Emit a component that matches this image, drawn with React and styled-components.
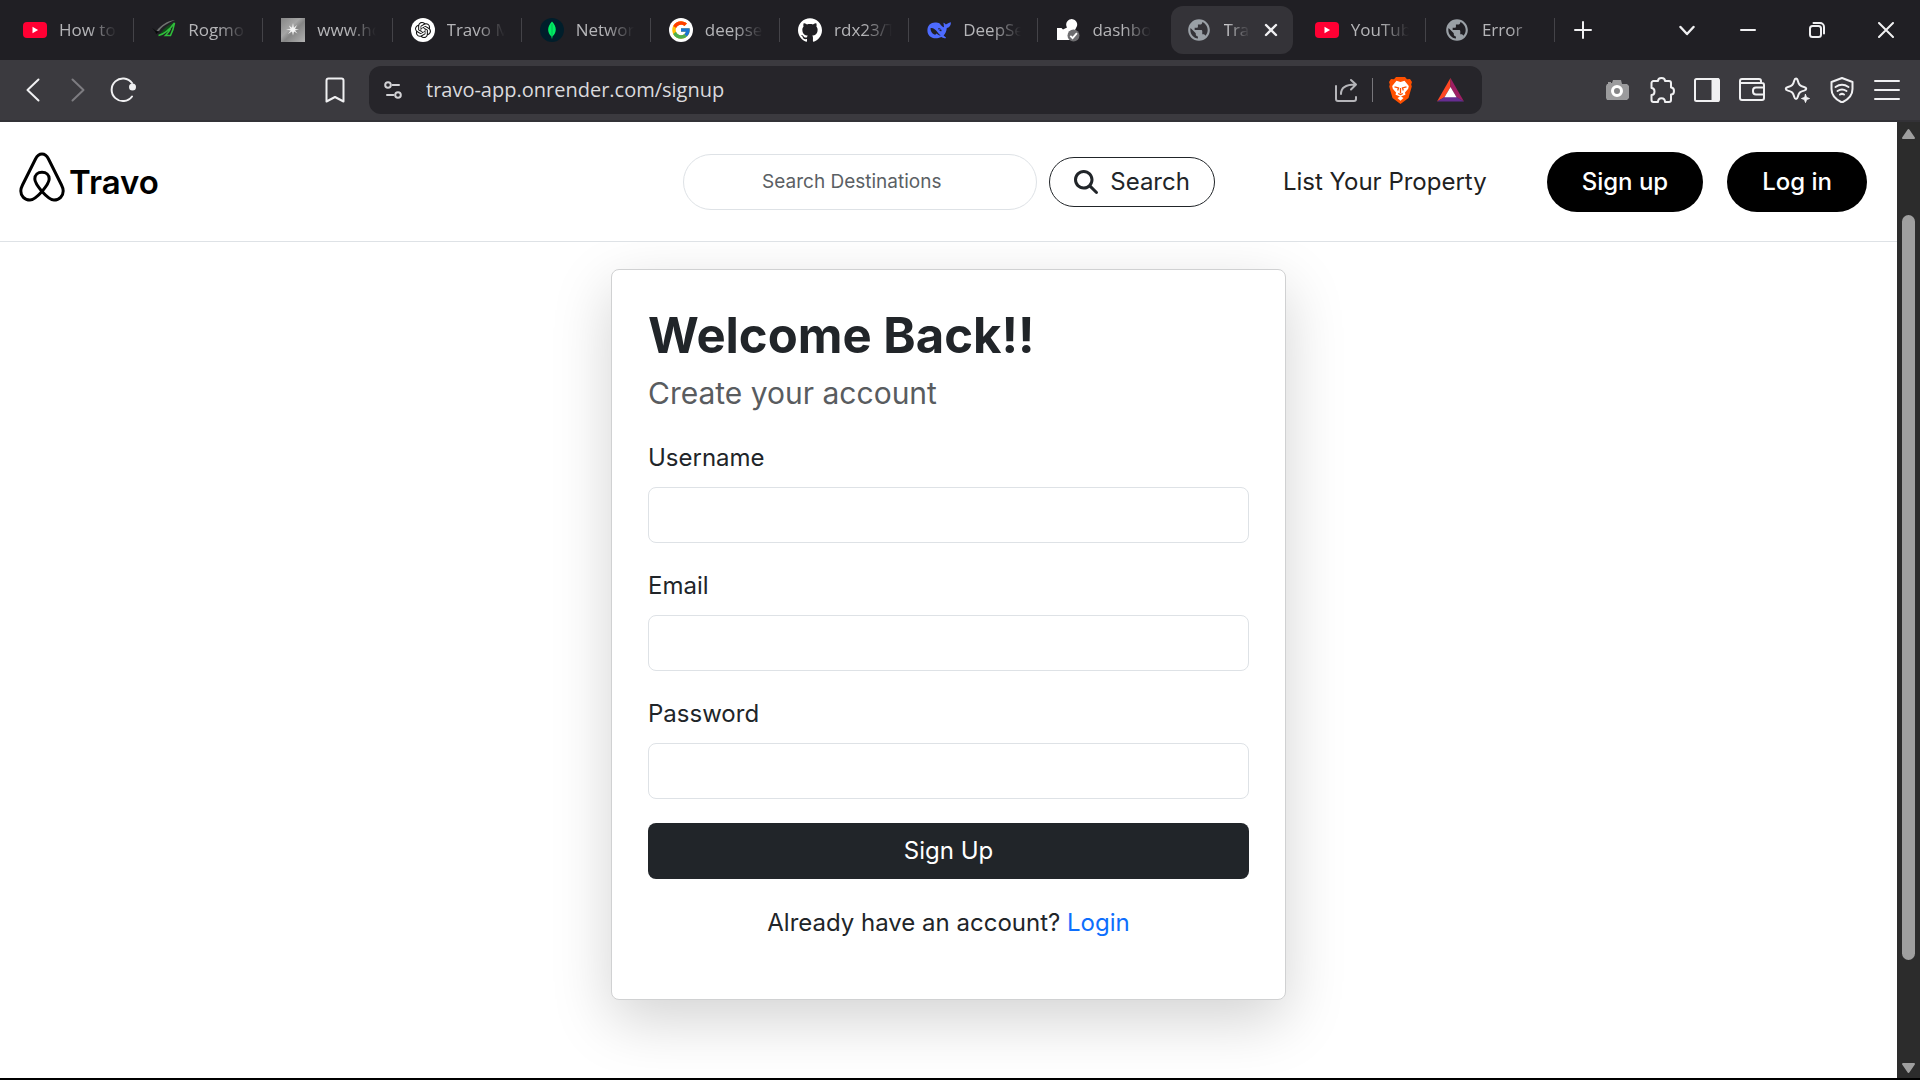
import React from "react";
import styled, { createGlobalStyle } from "styled-components";
import { SiOpenai, SiGithub } from "react-icons/si";
import { FcGoogle } from "react-icons/fc";
import { MdPublic } from "react-icons/md";
import { FaMagnifyingGlass } from "react-icons/fa6";

const uiFont = '"Open Sans", "Noto Sans", sans-serif';
const pageFont = 'Inter, "Liberation Sans", sans-serif';

const GlobalStyle = createGlobalStyle`
  *, *::before, *::after { box-sizing: border-box; }
  body { margin: 0; background: #000; font-family: ${pageFont}; }
  button, input { font: inherit; margin: 0; }
  svg { display: block; flex: none; }
`;

const Window = styled.div`
  display: flex;
  flex-direction: column;
  height: 100vh;
  border-bottom: 2px solid #000;
`;

/* ---------- browser chrome ---------- */

const TabBar = styled.header`
  display: flex;
  align-items: center;
  flex: none;
  height: 60px;
  background: #201f24;
  font-family: ${uiFont};
`;

const TabList = styled.div`
  display: flex;
  align-items: center;
  flex: 1;
  min-width: 0;
  padding-left: 5px;
`;

const Tab = styled.div`
  display: flex;
  align-items: center;
  flex: 1 1 0;
  min-width: 0;
  height: 48px;
  gap: 12px;
  margin: ${(p) => (p.$active ? "0 3px" : "0")};
  padding: ${(p) => (p.$active ? "0 13px 0 15px" : "0 16px 0 18px")};
  border-radius: 12px;
  background: ${(p) => (p.$active ? "#343338" : "transparent")};
  color: ${(p) => (p.$active ? "#e2e2e4" : "#b5b5b8")};
`;

const TabTitle = styled.span`
  flex: 1;
  min-width: 0;
  overflow: hidden;
  white-space: nowrap;
  font-size: 17px;
  line-height: 24px;
  mask-image: linear-gradient(to right, #000 calc(100% - 28px), transparent);
`;

const TabDivider = styled.span`
  flex: none;
  width: 1px;
  height: 24px;
  background: ${(p) => (p.$hidden ? "transparent" : "#444348")};
`;

const IconButton = styled.button`
  display: flex;
  align-items: center;
  justify-content: center;
  flex: none;
  width: ${(p) => p.$width || 45}px;
  height: 45px;
  padding: 0;
  border: 0;
  background: none;
  color: ${(p) => p.$color || "#f0f0f2"};
`;

const WindowControls = styled.div`
  display: flex;
  margin-left: 50px;
`;

const Toolbar = styled.div`
  display: flex;
  align-items: center;
  flex: none;
  height: 62px;
  padding: 0 11px 0 10px;
  border-bottom: 2px solid #333237;
  background: #3b3a3f;
`;

const ToolGroup = styled.div`
  display: flex;
`;

const AddressBar = styled.div`
  display: flex;
  align-items: center;
  flex: 1;
  min-width: 0;
  height: 48px;
  margin: 0 112px 0 12px;
  padding: 0 4px 0 8px;
  border-radius: 12px;
  background: #26252a;
`;

const AddressInput = styled.input`
  flex: 1;
  min-width: 0;
  margin-left: 17px;
  padding: 0;
  border: 0;
  outline: 0;
  background: none;
  color: #dadadd;
  font-family: ${uiFont};
  font-size: 20px;
  line-height: 32px;
`;

const AddressDivider = styled.span`
  width: 1px;
  height: 24px;
  margin: 0 5px 0 4px;
  background: #77767b;
`;

const BookmarkButton = styled(IconButton)`
  margin-left: 167px;
`;

/* ---------- page ---------- */

const Viewport = styled.div`
  display: flex;
  flex: 1;
  min-height: 0;
`;

const Page = styled.div`
  flex: 1;
  min-width: 0;
  overflow: hidden;
  background: #fff;
`;

const Nav = styled.nav`
  display: flex;
  align-items: center;
  position: relative;
  z-index: 1;
  height: 120px;
  padding: 0 30px 0 19px;
  border-bottom: 1px solid #dee2e6;
  background: #fff;
`;

const Brand = styled.a`
  display: flex;
  align-items: flex-end;
  gap: 4px;
  margin-right: auto;
  padding-bottom: 10px;
  color: #000;
  font-size: 33px;
  font-weight: 600;
  line-height: 40px;
  text-decoration: none;
`;

const SearchForm = styled.form`
  display: flex;
  align-items: center;
  gap: 12px;
`;

const SearchInput = styled.input`
  width: 354px;
  height: 56px;
  border: 1px solid #dee2e6;
  border-radius: 28px;
  background: #fff;
  color: #212529;
  font-size: 19px;
  text-align: center;
  &::placeholder { color: #5b5f64; opacity: 1; }
`;

const SearchButton = styled.button`
  display: flex;
  align-items: center;
  gap: 12px;
  height: 50px;
  padding: 0 24px;
  border: 1px solid #212529;
  border-radius: 25px;
  background: #fff;
  color: #212529;
  font-size: 24px;
`;

const NavLink = styled.a`
  margin: 0 60px 0 68px;
  color: #212121;
  font-size: 24px;
  line-height: 36px;
  text-decoration: none;
`;

const Actions = styled.div`
  display: flex;
  gap: 24px;
`;

const PillLink = styled.a`
  padding: 12px 35px;
  border-radius: 30px;
  background: #000;
  color: #fff;
  font-size: 24px;
  font-weight: 500;
  line-height: 36px;
  text-decoration: none;
`;

const Main = styled.main`
  display: flex;
  justify-content: center;
  padding: 27px 24px;
`;

const Card = styled.form`
  width: 100%;
  max-width: 675px;
  padding: 36px 36px 57px;
  border: 1px solid #d0d1d2;
  border-radius: 8px;
  background: #fff;
  box-shadow: 0 20px 60px rgba(0, 0, 0, 0.175);
  color: #212529;
  font-size: 24px;
  line-height: 38px;
`;

const Title = styled.h1`
  margin: 0 0 8px;
  font-size: 49px;
  font-weight: 700;
  line-height: 60px;
`;

const Subtitle = styled.p`
  margin: 0 0 27px;
  color: #595c5f;
  font-size: 30px;
`;

const Field = styled.div`
  display: flex;
  flex-direction: column;
  gap: 10px;
  margin-bottom: 24px;
`;

const TextInput = styled.input`
  width: 100%;
  height: 56px;
  padding: 0 15px;
  border: 1px solid #dee2e6;
  border-radius: 8px;
  background: #fff;
`;

const SubmitButton = styled.button`
  width: 100%;
  height: 56px;
  border: 0;
  border-radius: 8px;
  background: #212529;
  color: #fff;
`;

const LoginNote = styled.p`
  margin: 25px 0 0;
  text-align: center;
`;

const LoginLink = styled.a`
  color: #0d6efd;
  text-decoration: none;
`;

const ScrollBar = styled.aside`
  display: flex;
  flex-direction: column;
  align-items: center;
  flex: none;
  width: 23px;
  padding: 6px 0 4px;
  background: #2c2c2c;
`;

const ScrollSpace = styled.span`
  flex: ${(p) => p.$grow};
`;

const ScrollThumb = styled.span`
  flex: 746;
  width: 13px;
  border-radius: 7px;
  background: #9f9f9f;
`;

/* ---------- drawings ---------- */

const Stroke = ({ size = 26, width = 2, box = 26, children }) => (
  <svg width={size} height={size} viewBox={`0 0 ${box} ${box}`} fill="none" stroke="currentColor" strokeWidth={width} strokeLinecap="round" strokeLinejoin="round" aria-hidden="true">
    {children}
  </svg>
);

const YouTube = () => (
  <svg width="24" height="24" viewBox="0 0 24 24">
    <rect y="4" width="24" height="16" rx="4" fill="#ff0033" />
    <path d="M9.5 8.8v6.4l5.6-3.2z" fill="#fff" />
  </svg>
);

const Rog = () => (
  <svg width="24" height="24" viewBox="0 0 24 24" fill="none">
    <path d="M0 10c2 1 5 4 7 4l-3 2c0-2-2-4-4-6z" fill="#08090a" />
    <path d="M4.500 13C9 7 15 3 23 2c-4 2-11 4-16 11z" fill="#6f7371" />
    <path d="M7 18C10 12 15 7 22.500 4.500c-3.500 3-6 5-8 9.500z" fill="#124a1b" />
    <path d="M6.500 17.500C13 16 18 11 22.500 5c-.7 4.500-2 8.500-4 12.500h-5c2-2 4-4.500 5-7" stroke="#2fbf3a" strokeWidth="1.600" />
  </svg>
);

const Sparkle = () => (
  <svg width="24" height="24" viewBox="0 0 24 24">
    <defs>
      <linearGradient id="steel" x1="0" y1="0" x2="1" y2="1">
        <stop stopColor="#878787" />
        <stop offset=".4" stopColor="#a5a5a5" />
        <stop offset=".55" stopColor="#858585" />
        <stop offset="1" stopColor="#b2b2b2" />
      </linearGradient>
    </defs>
    <path d="M0 0h24v24H0z" fill="url(#steel)" />
    <path d="m12 5 .9 4.7L16 7l-2 4 4 .5-4 1 2.5 3-3.5-2-1 4-1-4-4 2.5 2.7-3.6L5 11.5l4.5-.5L8 7.5l3 2.2z" fill="#f4f4f4" />
  </svg>
);

const OpenAi = () => (
  <svg width="24" height="24" viewBox="0 0 24 24">
    <circle cx="12" cy="12" r="12" fill="#fff" />
    <SiOpenai x="4" y="4" size={16} color="#111" />
  </svg>
);

const Mongo = () => (
  <svg width="24" height="24" viewBox="0 0 24 24">
    <circle cx="12" cy="12" r="12" fill="#001e2b" />
    <path d="M12 3.5c5 5 5 11 .4 15l-.2 2h-.5l-.2-2C7 14.5 7 8.5 12 3.5z" fill="#00ed64" />
    <path d="M12 6v12.5" stroke="#00a84e" strokeWidth=".7" />
  </svg>
);

const Google = () => (
  <svg width="24" height="24" viewBox="0 0 24 24">
    <circle cx="12" cy="12" r="12" fill="#fff" />
    <FcGoogle x="1.5" y="1.5" size={21} />
  </svg>
);

const Whale = () => (
  <svg width="24" height="24" viewBox="0 0 24 24">
    <path d="M.4 12.500C.4 7.500 3.800 4.600 8 4.600c2 0 3.500.2 5 1.200.4.800 1.100 1.800 2.100 2.400.8.600 1.300.9 1.900 1-.4-1.500 0-3.300-.7-4.500 1.300.2 2 .9 2.600 1.800C19.800 6.200 21.300 4.700 23.900 4.300c.2 3-1.500 5.200-4.100 5.800-.3 3.300-1.400 5.800-3.200 7.500l2.300 1.900c.3.500-.4.900-1.300.8-1.200-.1-2.100-.8-3.200-1.300C7 22.400.4 19 .4 12.500z" fill="#4d6bfe" />
    <path d="M3.500 10.200c2.300-.6 5.100 1.200 7 4 1.200 1.700 2 2.500 3.300 3.100-1.500.5-2.800-.3-4.100-1.700-.8.300-1 1.600-2.400 1C4.800 15.400 3.500 13 3.500 10.200z" fill="#201f24" />
    <path d="M11 10.600c1.700-.8 3.400.3 3.600 2.400-1.300.7-2.600-.5-3.600-2.400z" fill="#201f24" />
    <circle cx="12.900" cy="11.600" r=".7" fill="#4d6bfe" />
  </svg>
);

const Dashboard = () => (
  <svg width="24" height="24" viewBox="0 0 24 24">
    <path d="M1 10h4.500l1.500 1.500 4-2A5.500 5.500 0 1 1 21 8l-3 6-3 8H1z" fill="#fff" />
    <circle cx="17.500" cy="17.500" r="6" fill="#6d6d70" />
    <path d="m14.300 17.800 2.300 2.300 4.300-5" fill="none" stroke="#fff" strokeWidth="1.800" />
  </svg>
);

const Globe = () => <MdPublic size={26} color="#9aa0a6" />;

const Bat = () => (
  <svg width="27" height="24" viewBox="0 0 27 24">
    <path d="M13.500 0 0 23.500l7.500-4.200 6-10.300z" fill="#ff4724" />
    <path d="M13.500 0v9l6 10.300 7.500 4.200z" fill="#9e1f63" />
    <path d="M0 23.500h27l-7.500-4.500h-12z" fill="#662d91" />
    <path d="m13.500 9-6 10.300h12z" fill="#fff" />
  </svg>
);

const BraveLion = () => (
  <svg width="25" height="28" viewBox="0 0 25 28">
    <path d="M8 1h9l2 2.200 3-.2 2 3-.8 2.500.6 2-3.300 11.500-8 6-8-6-3.300-11.500.6-2L1 6l2-3 3 .2z" fill="#ff5000" />
    <path d="m12.500 6 4-1.200 4.300 5.300-.6 2.600-3.200 3.700.4 2.300-3.200 1.200-1.700 1.200-1.700-1.200-3.200-1.200.4-2.300-3.200-3.700-.6-2.600 4.300-5.300z" fill="#fff" />
    <path d="m12.500 20.300 3 1.800-3 2.600-3-2.600z" fill="#fff" />
    <path d="m6.500 10.800 4 1.200-.8 2.500M18.500 10.800l-4 1.200.8 2.500M12.500 12v5.300m-2.300.2 2.300 1 2.300-1" fill="none" stroke="#ff5000" strokeWidth="1.300" />
  </svg>
);

const Camera = () => (
  <svg width="24" height="22" viewBox="0 0 24 22">
    <path d="M2 5h1V3h3v1h1l1-3h8l1 4h5l2 2v12l-2 2H2l-1-2V7z" fill="#9b9b9d" />
    <circle cx="12" cy="12" r="4.500" fill="#858587" stroke="#fff" strokeWidth="3" />
  </svg>
);

const TravoMark = () => (
  <svg width="46" height="50" viewBox="0 0 46 50" fill="none" stroke="#000" strokeWidth="3" aria-hidden="true">
    <path d="M23 39.500C18 33.500 15.800 30.500 15.800 27c0-4 2.900-6.700 7.200-6.700s7.200 2.700 7.200 6.700c0 3.500-2.200 6.500-7.200 12.500-4.500 5-8 8.500-12 8.500-5.500 0-9.200-4-9.200-9 0-2 .7-4 1.700-6L16.500 7C18.300 3.400 20 2 23 2s4.700 1.400 6.500 5l13 26c1 2 1.700 4 1.700 6 0 5-3.700 9-9.200 9-4 0-7.500-3.500-12-8.500z" />
  </svg>
);

const Arrow = ({ down }) => (
  <svg width="15" height="12" viewBox="0 0 15 12" fill="#9f9f9f" stroke="#9f9f9f" strokeWidth="2" strokeLinejoin="round">
    <path d={down ? "M2 2h11L7.500 10z" : "M2 10h11L7.500 2z"} />
  </svg>
);

const tabs = [
  { title: "How to", icon: <YouTube /> },
  { title: "Rogmo", icon: <Rog /> },
  { title: "www.ho", icon: <Sparkle /> },
  { title: "Travo M", icon: <OpenAi /> },
  { title: "Networ", icon: <Mongo /> },
  { title: "deepse", icon: <Google /> },
  { title: "rdx23/T", icon: <SiGithub size={24} color="#fff" /> },
  { title: "DeepSe", icon: <Whale /> },
  { title: "dashbo", icon: <Dashboard />, last: true },
  { title: "Tra", icon: <Globe />, active: true, last: true },
  { title: "YouTub", icon: <YouTube /> },
  { title: "Error", icon: <Globe /> },
];

const fields = [
  { id: "username", label: "Username", type: "text" },
  { id: "email", label: "Email", type: "email" },
  { id: "password", label: "Password", type: "password" },
];

export default function App() {
  return (
    <Window>
      <GlobalStyle />
      <TabBar>
        <TabList>
          {tabs.map((t) => (
            <React.Fragment key={t.title}>
              <Tab $active={t.active}>
                {t.icon}
                <TabTitle>{t.title}</TabTitle>
                {t.active && (
                  <IconButton $width={18} aria-label="Close tab">
                    <Stroke size={14} box={14} width={2.4}><path d="m2 2 10 10M12 2 2 12" /></Stroke>
                  </IconButton>
                )}
              </Tab>
              <TabDivider $hidden={t.last} />
            </React.Fragment>
          ))}
        </TabList>
        <IconButton $width={56} aria-label="New tab"><Stroke size={18} box={18}><path d="M9 1v16M1 9h16" /></Stroke></IconButton>
        <WindowControls>
          <IconButton $width={52} aria-label="Search tabs"><Stroke size={16} box={16} width={2.4}><path d="m1.500 5 6.500 7 6.500-7" /></Stroke></IconButton>
          <IconButton $width={69} aria-label="Minimize"><Stroke size={16} box={16}><path d="M1 8h14" /></Stroke></IconButton>
          <IconButton $width={69} aria-label="Restore"><Stroke size={16} box={16}><rect x="1" y="4" width="11" height="11" rx="2.500" /><path d="M4.500 1H11a4 4 0 0 1 4 4v6.500" /></Stroke></IconButton>
          <IconButton $width={69} aria-label="Close window"><Stroke size={16} box={16}><path d="m1 1 14 14M15 1 1 15" /></Stroke></IconButton>
        </WindowControls>
      </TabBar>

      <Toolbar>
        <ToolGroup>
          <IconButton aria-label="Back"><Stroke><path d="m18.500 2.500-11 10.500 11 10.500" /></Stroke></IconButton>
          <IconButton $color="#7d7c81" aria-label="Forward"><Stroke><path d="m7.500 2.500 11 10.500-11 10.500" /></Stroke></IconButton>
          <IconButton aria-label="Reload"><Stroke><path d="M22 19.500A11.300 11.300 0 1 1 22 6" /><circle cx="22.500" cy="10" r="2.500" fill="currentColor" /></Stroke></IconButton>
        </ToolGroup>
        <BookmarkButton aria-label="Bookmark"><Stroke><path d="M4.500 3.500a2 2 0 0 1 2-2h13a2 2 0 0 1 2 2v21L13 20l-8.500 4.500z" /></Stroke></BookmarkButton>
        <AddressBar>
          <IconButton $width={32} $color="#d2d2d5" aria-label="Site information">
            <Stroke size={18} box={18}><circle cx="4" cy="4" r="2.800" /><path d="M8.500 4H15M3 14h6.500" /><circle cx="14" cy="14" r="2.800" /></Stroke>
          </IconButton>
          <AddressInput aria-label="Address" defaultValue="travo-app.onrender.com/signup" />
          <IconButton $color="#b5b5b9" aria-label="Share">
            <Stroke size={24} box={24}><path d="M2 8v13a2 2 0 0 0 2 2h16a2 2 0 0 0 2-2v-2M7 16c0-6 4-9.500 14-9.500M17 2l5 4.500-5 5" /></Stroke>
          </IconButton>
          <AddressDivider />
          <IconButton aria-label="Brave Shields"><BraveLion /></IconButton>
          <IconButton $width={55} aria-label="Rewards"><Bat /></IconButton>
        </AddressBar>
        <ToolGroup>
          <IconButton aria-label="Screenshot"><Camera /></IconButton>
          <IconButton aria-label="Extensions">
            <Stroke><path d="M2.500 6a2 2 0 0 1 2-2H9c0-4 7-4 7 0h4a2 2 0 0 1 2 2v4.500c4 0 4 7 0 7V23a2 2 0 0 1-2 2h-4c0-5-7-5-7 0H4.500a2 2 0 0 1-2-2v-5c4 0 4-7 0-7z" /></Stroke>
          </IconButton>
          <IconButton aria-label="Sidebar"><Stroke><rect x="1" y="2" width="24" height="22" rx="1.500" /><path d="M18.500 2H24v22h-5.500z" fill="currentColor" /></Stroke></IconButton>
          <IconButton aria-label="Wallet"><Stroke><path d="M22 6V4a2 2 0 0 0-2-2H3a2 2 0 0 0-2 2v17a2 2 0 0 0 2 2h20a2 2 0 0 0 2-2V8a2 2 0 0 0-2-2H1M25 10.500h-8a3 3 0 0 0-3 3v1a3 3 0 0 0 3 3h8" /></Stroke></IconButton>
          <IconButton aria-label="Assistant"><Stroke><path d="M12 1.500c1 0 1.500 1 1.800 2.300 1 4 2.200 5.200 6.200 6.200 3 .8 3 2.700 0 3.600-4 1-5.200 2.200-6.200 6.200-.7 3-2.800 3-3.600 0-1-4-2.200-5.200-6.200-6.200-3-.9-3-2.800 0-3.600 4-1 5.200-2.200 6.200-6.200.3-1.300.8-2.300 1.800-2.300z" /><path d="m21.500 17.500 1 3 3 1-3 1-1 3-1-3-3-1 3-1z" fill="currentColor" strokeWidth="1" /></Stroke></IconButton>
          <IconButton aria-label="VPN"><Stroke><path d="M13 1 23.500 5v7c0 6-4 10.500-10.500 13.500C6.500 22.500 2.500 18 2.500 12V5z" /><path d="M6.500 10c4-2.700 9-2.700 13 0M8.500 14c3-2 6-2 9 0M11 17.500c1.300-.8 2.700-.8 4 0" /></Stroke></IconButton>
          <IconButton aria-label="Menu"><Stroke><path d="M1 4h24M1 13h24M1 22h24" /></Stroke></IconButton>
        </ToolGroup>
      </Toolbar>

      <Viewport>
        <Page>
          <Nav>
            <Brand href="#"><TravoMark />Travo</Brand>
            <SearchForm>
              <SearchInput type="search" placeholder="Search Destinations" aria-label="Search Destinations" />
              <SearchButton type="button"><FaMagnifyingGlass size={24} />Search</SearchButton>
            </SearchForm>
            <NavLink href="#">List Your Property</NavLink>
            <Actions>
              <PillLink href="#">Sign up</PillLink>
              <PillLink href="#">Log in</PillLink>
            </Actions>
          </Nav>
          <Main>
            <Card>
              <Title>Welcome Back!!</Title>
              <Subtitle>Create your account</Subtitle>
              {fields.map((f) => (
                <Field key={f.id}>
                  <label htmlFor={f.id}>{f.label}</label>
                  <TextInput id={f.id} name={f.id} type={f.type} />
                </Field>
              ))}
              <SubmitButton type="button">Sign Up</SubmitButton>
              <LoginNote>
                Already have an account? <LoginLink href="#">Login</LoginLink>
              </LoginNote>
            </Card>
          </Main>
        </Page>
        <ScrollBar aria-hidden="true">
          <Arrow />
          <ScrollSpace $grow={75} />
          <ScrollThumb />
          <ScrollSpace $grow={102} />
          <Arrow down />
        </ScrollBar>
      </Viewport>
    </Window>
  );
}
